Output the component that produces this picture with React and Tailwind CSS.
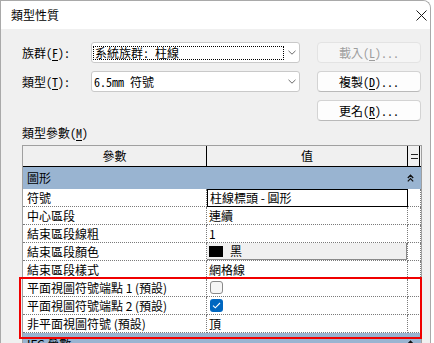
import React from "react";

function Chevron() {
  return (
    <svg width="8" height="5" viewBox="0 0 8 5" className="shrink-0">
      <path d="M0.5 0.8 L4 4.2 L7.5 0.8" fill="none" stroke="#6a6a6a" strokeWidth="1" />
    </svg>
  );
}

function DoubleUp() {
  return (
    <svg width="7" height="8" viewBox="0 0 7 8" className="shrink-0">
      <path d="M0.8 4 L3.5 1.2 L6.2 4 M0.8 7.4 L3.5 4.6 L6.2 7.4" fill="none" stroke="#111" strokeWidth="1.3" />
    </svg>
  );
}

function Eq() {
  return (
    <svg width="7" height="5" viewBox="0 0 7 5">
      <path d="M0 0.5 H7 M0 4.5 H7" stroke="#222" strokeWidth="1" />
    </svg>
  );
}

function Btn({ children, disabled }) {
  return (
    <div
      className={
        "w-[104px] h-[21px] rounded-[4px] border flex items-center justify-center " +
        (disabled
          ? "bg-[#f5f5f5] border-[#e3e3e3] text-[#9d9d9d]"
          : "bg-[#fdfdfd] border-[#d3d3d3] border-b-[#b9b9b9] text-black")
      }
    >
      {children}
    </div>
  );
}

function Row({ name, children, valueClass, first }) {
  return (
    <div className="grid grid-cols-[184px_201px_13px] h-[18px]">
      <div className="border-r border-b border-dotted border-[#7a7a7a] flex items-center pl-[4px] bg-white whitespace-nowrap">
        {name}
      </div>
      <div
        className={
          valueClass ||
          "border-r border-b border-dotted border-[#7a7a7a] flex items-center pl-[2px] bg-white whitespace-nowrap"
        }
      >
        {children}
      </div>
      <div className="border-r border-b border-dotted border-[#7a7a7a] bg-white"></div>
    </div>
  );
}

export default function App() {
  const mono = "font-['Noto_Sans_Mono_CJK_TC','Noto_Sans_CJK_TC',monospace]";
  return (
    <div className="w-[434px] h-[343px] overflow-hidden bg-white relative font-['Noto_Sans_CJK_TC',sans-serif] text-[12px] leading-none text-black">
      <div className="w-[431px] h-[380px] border-l border-t border-r border-[#a9a9a9] rounded-tr-[8px] bg-[#f0f0f0] flex flex-col overflow-hidden">
        {/* title bar */}
        <div className="h-[28px] bg-white flex items-center justify-between pl-[10px] pr-[3px] shrink-0">
          <span className="text-[12px]">類型性質</span>
          <svg width="11" height="11" viewBox="0 0 11 11">
            <path d="M0.5 0.5 L10.5 10.5 M10.5 0.5 L0.5 10.5" stroke="#1a1a1a" strokeWidth="1" />
          </svg>
        </div>

        {/* body */}
        <div className="flex flex-col pl-[21px] pt-[13px]">
          <div className={"flex " + mono}>
            <div className="grid grid-cols-[69px_209px] auto-rows-[21px] gap-y-[8px] w-[278px]">
              <div className="flex items-center">
                <span>族群(<span className="underline underline-offset-[2px]">F</span>):</span>
              </div>
              <div className="bg-white border border-[#c9c9c9] rounded-[3px] flex items-center justify-between pl-[1px] pr-[3px]">
                <span className="border border-dotted border-black h-[14px] w-[191px] flex items-center pl-[1px] whitespace-nowrap">
                  系統族群: 柱線
                </span>
                <Chevron />
              </div>
              <div className="flex items-center">
                <span>類型(<span className="underline underline-offset-[2px]">T</span>):</span>
              </div>
              <div className="bg-white border border-[#c9c9c9] rounded-[3px] flex items-center justify-between pl-[2px] pr-[3px]">
                <span className="whitespace-nowrap">6.5mm 符號</span>
                <Chevron />
              </div>
            </div>
            <div className="ml-[17px] flex flex-col gap-[8px]">
              <Btn disabled>
                載入(<span className="underline underline-offset-[2px]">L</span>)...
              </Btn>
              <Btn>
                複製(<span className="underline underline-offset-[2px]">D</span>)...
              </Btn>
              <Btn>
                更名(<span className="underline underline-offset-[2px]">R</span>)...
              </Btn>
            </div>
          </div>

          <div className={"h-[17px] mt-[3px] flex items-center " + mono}>
            <span>類型參數(<span className="underline underline-offset-[2px]">M</span>)</span>
          </div>

          {/* table */}
          <div className="mt-[4px] w-[400px] border border-[#a0a0a0] bg-white flex flex-col">
            <div className="grid grid-cols-[184px_201px_12px] h-[21px] bg-[#f0f0f0] border-b border-black">
              <div className="border-r border-black flex items-center justify-center">參數</div>
              <div className="border-r border-black flex items-center justify-center">值</div>
              <div className="border-r border-black flex items-center justify-center pl-[1px]">
                <Eq />
              </div>
            </div>
            <div className="h-[22px] bg-[#99b4d1] flex items-center justify-between pl-[4px] pr-[7px]">
              <span>圖形</span>
              <DoubleUp />
            </div>
            <Row
              name="符號"
              valueClass="border border-black flex items-center pl-[2px] bg-white whitespace-nowrap"
            >
              柱線標頭 - 圓形
            </Row>
            <Row name="中心區段">連續</Row>
            <Row name="結束區段線粗">1</Row>
            <Row
              name="結束區段顏色"
              valueClass="border-r border-b border-dotted border-[#7a7a7a] bg-white"
            >
              <div className="h-[17px] w-[200px] bg-[#f0f0f0] border-r border-b border-[#8a8a8a] flex items-center pl-[2px]">
                <span className="w-[14px] h-[11px] bg-black shrink-0"></span>
                <span className="ml-[7px]">黑</span>
              </div>
            </Row>
            <Row name="結束區段樣式">網格線</Row>
            <Row name="平面視圖符號端點 1 (預設)">
              <span className="ml-[1px] w-[13px] h-[13px] rounded-[3px] border border-[#8a8a8a] bg-[#f6f6f6]"></span>
            </Row>
            <Row name="平面視圖符號端點 2 (預設)">
              <span className="ml-[1px] w-[13px] h-[13px] rounded-[3px] bg-[#0067c0] flex items-center justify-center">
                <svg width="9" height="7" viewBox="0 0 9 7">
                  <path d="M1 3.6 L3.3 5.8 L8 1" fill="none" stroke="white" strokeWidth="1.1" />
                </svg>
              </span>
            </Row>
            <Row name="非平面視圖符號 (預設)">頂</Row>
            <div className="h-[22px] bg-[#99b4d1] flex items-center justify-between pl-[4px] pr-[7px]">
              <span>IFC 參數</span>
              <DoubleUp />
            </div>
          </div>
        </div>
      </div>

      {/* red annotation box */}
      <div className="absolute left-[19px] top-[277px] w-[403px] h-[62px] border-2 border-[#f00000]"></div>
    </div>
  );
}
